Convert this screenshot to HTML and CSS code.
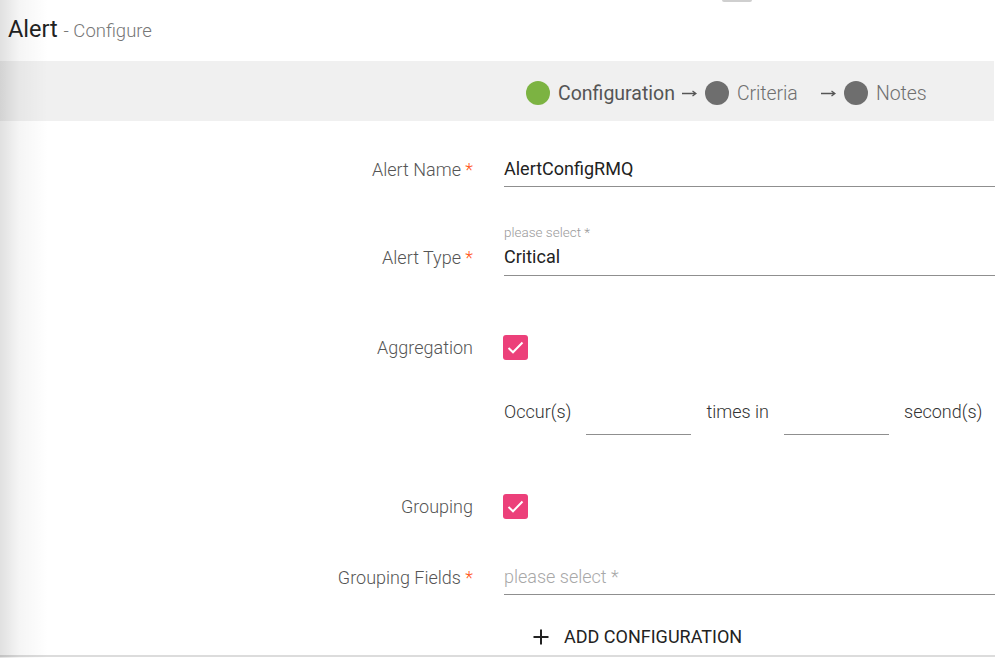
FILE: index.html
```html
<!DOCTYPE html>
<html>
<head>
<meta charset="utf-8">
<link rel="stylesheet" href="styles.css">
</head>
<body>
<div class="page">
  <div class="scroll-nub"></div>
  <div class="edge-shadow"></div>
  <header class="header">
    <h1 class="title">Alert <span class="subtitle">- Configure</span></h1>
  </header>
  <div class="band">
    <div class="stepper">
      <div class="step">
        <span class="dot dot-active"></span>
        <span class="step-label step-label-active">Configuration</span>
        <svg class="arrow" viewBox="0 0 15 10" width="15" height="10"><path d="M0 5.5 H14 M10.5 3 L14 5.5 L10.5 8" fill="none" stroke="#555" stroke-width="1.3"/></svg>
      </div>
      <div class="step">
        <span class="dot"></span>
        <span class="step-label">Criteria</span>
        <svg class="arrow" viewBox="0 0 15 10" width="15" height="10"><path d="M0 5.5 H14 M10.5 3 L14 5.5 L10.5 8" fill="none" stroke="#555" stroke-width="1.3"/></svg>
      </div>
      <div class="step">
        <span class="dot"></span>
        <span class="step-label">Notes</span>
      </div>
    </div>
  </div>

  <form class="form">
    <div class="row row-name">
      <label class="label">Alert Name <span class="req">*</span></label>
      <div class="field"><span class="value">AlertConfigRMQ</span></div>
    </div>

    <div class="row row-type">
      <label class="label label-type">Alert Type <span class="req">*</span></label>
      <div class="field field-float">
        <span class="float-label">please select *</span>
        <span class="value">Critical</span>
      </div>
    </div>

    <div class="row row-check row-agg">
      <label class="label">Aggregation</label>
      <div class="cell">
        <span class="checkbox">
          <svg viewBox="0 0 25 25" width="25" height="25"><path d="M5.5 13 L10 17.3 L19.5 7.5" fill="none" stroke="#fff" stroke-width="2"/></svg>
        </span>
      </div>
    </div>

    <div class="row row-occur">
      <span class="label"></span>
      <div class="inline">
        <span class="inline-text">Occur(s)</span>
        <span class="mini-input"></span>
        <span class="inline-text">times in</span>
        <span class="mini-input"></span>
        <span class="inline-text">second(s)</span>
      </div>
    </div>

    <div class="row row-check row-group">
      <label class="label">Grouping</label>
      <div class="cell">
        <span class="checkbox">
          <svg viewBox="0 0 25 25" width="25" height="25"><path d="M5.5 13 L10 17.3 L19.5 7.5" fill="none" stroke="#fff" stroke-width="2"/></svg>
        </span>
      </div>
    </div>

    <div class="row row-fields">
      <label class="label">Grouping Fields <span class="req">*</span></label>
      <div class="field"><span class="placeholder">please select *</span></div>
    </div>

    <div class="row row-add">
      <span class="label"></span>
      <div class="cell">
        <button type="button" class="add-btn">
          <svg class="plus" viewBox="0 0 16 16" width="16" height="16"><path d="M8 0.5 V15.5 M0.5 8 H15.5" stroke="#222" stroke-width="2" fill="none"/></svg>
          <span>ADD CONFIGURATION</span>
        </button>
      </div>
    </div>
  </form>
  <div class="bottom-line"></div>
</div>
</body>
</html>
```

FILE: styles.css
```css
* { box-sizing: border-box; }
html, body {
  margin: 0;
  padding: 0;
  background: #fff;
}
body {
  font-family: Roboto, "Liberation Sans", Arial, sans-serif;
  color: #222;
}
.page {
  position: relative;
  width: 995px;
  height: 658px;
  overflow: hidden;
}
.scroll-nub {
  position: absolute;
  left: 722px;
  top: 0;
  width: 30px;
  height: 2px;
  background: #cfcfcf;
  border-radius: 0 0 2px 2px;
}
.edge-shadow {
  position: absolute;
  left: 0;
  top: 0;
  bottom: 0;
  width: 48px;
  background: linear-gradient(to right, rgba(0,0,0,0.12), rgba(0,0,0,0.04) 40%, rgba(0,0,0,0));
  pointer-events: none;
  z-index: 5;
}
.header {
  height: 61px;
  padding-left: 8px;
  padding-top: 14px;
}
.title {
  margin: 0;
  font-size: 23.5px;
  font-weight: 400;
  line-height: 30px;
  color: #222;
}
.subtitle {
  font-size: 18.5px;
  color: #777;
  font-weight: 300;
}
.band {
  height: 60px;
  background: #f0f0f0;
  margin-right: 1px;
  display: flex;
  align-items: center;
  padding-left: 526px;
  padding-top: 4px;
}
.stepper {
  display: flex;
  align-items: center;
}
.step {
  display: flex;
  align-items: center;
}
.dot {
  width: 24px;
  height: 24px;
  border-radius: 50%;
  background: #6e6e6e;
  margin-right: 8px;
  flex: none;
}
.dot-active { background: #7cb342; }
.step-label {
  font-size: 19.5px;
  line-height: 24px;
  color: #6f6f6f;
  font-weight: 300;
  min-width: 77px;
  padding-top: 1px;
  letter-spacing: -0.1px;
}
.step-label-active {
  color: #555;
  font-weight: 400;
  letter-spacing: 0;
}
.arrow {
  margin-left: 7px;
  margin-right: 8px;
  flex: none;
}
.form {
  display: flex;
  flex-direction: column;
}
.row {
  display: grid;
  grid-template-columns: 473px 1fr;
  column-gap: 31px;
  align-items: end;
}
.label {
  text-align: right;
  font-size: 18px;
  line-height: 20px;
  font-weight: 300;
  color: #555;
  padding: 7px 0;
}
.label-type { padding-bottom: 8px; }
.req { color: #ff5722; }
.field {
  border-bottom: 1px solid #8f8f8f;
  padding: 7px 0;
  display: flex;
  flex-direction: column;
}
.value {
  font-size: 18px;
  line-height: 20px;
  color: #222;
}
.placeholder {
  font-size: 18px;
  line-height: 20px;
  color: #a8a8a8;
  font-weight: 300;
}
.field-float { padding-top: 0; padding-bottom: 8px; }
.float-label {
  font-size: 13.5px;
  line-height: 14px;
  color: #9a9a9a;
  font-weight: 300;
  margin-bottom: 8px;
}
.row-name { margin-top: 31px; }
.row-type { margin-top: 38px; }
.row-check { align-items: center; }
.row-check .label { padding: 0; }
.row-agg { margin-top: 59px; }
.row-group { margin-top: 59px; }
.cell { display: flex; align-items: center; }
.checkbox {
  width: 25px;
  height: 25px;
  margin-left: -1px;
  background: #ec407a;
  border-radius: 3px;
  display: flex;
  align-items: center;
  justify-content: center;
}
.row-occur {
  margin-top: 42px;
  align-items: start;
}
.row-occur .label { padding: 0; }
.inline {
  display: flex;
  align-items: flex-start;
  gap: 15px;
}
.inline-text {
  font-size: 18px;
  line-height: 20px;
  font-weight: 300;
  color: #333;
}
.mini-input {
  width: 105px;
  height: 33px;
  border-bottom: 1px solid #8f8f8f;
}
.row-fields { margin-top: 41px; }
.row-add {
  margin-top: 32px;
  align-items: center;
}
.row-add .label { padding: 0; }
.add-btn {
  margin-left: 29px;
  display: flex;
  align-items: center;
  gap: 15px;
  background: none;
  border: 0;
  padding: 0;
  font-family: Roboto, "Liberation Sans", Arial, sans-serif;
  font-size: 18px;
  line-height: 20px;
  font-weight: 400;
  color: #222;
  cursor: pointer;
}
.bottom-line {
  position: absolute;
  left: 0;
  right: 0;
  top: 655px;
  height: 2px;
  background: #dcdcdc;
}
```
